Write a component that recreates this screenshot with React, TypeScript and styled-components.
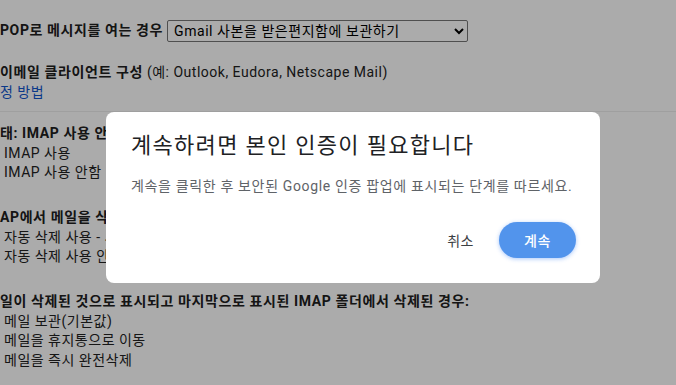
import React, { useState } from 'react';
import styled, { createGlobalStyle } from 'styled-components';

const GlobalStyle = createGlobalStyle`
  html, body {
    margin: 0;
    padding: 0;
    background: #ffffff;
    overflow: hidden;
  }
  body {
    font-family: Roboto, 'Noto Sans CJK KR', sans-serif;
    color: #222222;
  }
`;

type OptionGroup = {
  title: string;
  options: string[];
};

const groups: OptionGroup[] = [
  {
    title: '태: IMAP 사용 안함',
    options: ['IMAP 사용', 'IMAP 사용 안함'],
  },
  {
    title: 'AP에서 메일을 삭제로 표시할 경우:',
    options: [
      '자동 삭제 사용 - 서버를 즉시 업데이트합니다.',
      '자동 삭제 사용 안함 - 클라이언트가 서버를 업데이트할 때까지 기다립니다.',
    ],
  },
  {
    title: '일이 삭제된 것으로 표시되고 마지막으로 표시된 IMAP 폴더에서 삭제된 경우:',
    options: ['메일 보관(기본값)', '메일을 휴지통으로 이동', '메일을 즉시 완전삭제'],
  },
];

const App: React.FC = () => {
  const [open, setOpen] = useState(true);

  return (
    <>
      <GlobalStyle />
      <Page>
        <PopRow>
          <Strong>POP로 메시지를 여는 경우</Strong>
          <Select defaultValue="keep">
            <option value="keep">Gmail 사본을 받은편지함에 보관하기</option>
            <option value="read">Gmail 사본을 읽은 상태로 표시하기</option>
            <option value="archive">Gmail 사본을 보관처리하기</option>
            <option value="delete">Gmail 사본 삭제하기</option>
          </Select>
        </PopRow>
        <ClientBlock>
          <Line>
            <Strong>이메일 클라이언트 구성</Strong> (예: Outlook, Eudora, Netscape Mail)
          </Line>
          <Line>
            <Link href="#">정 방법</Link>
          </Line>
        </ClientBlock>
        <ImapSection>
          {groups.map((group) => (
            <Group key={group.title}>
              <Line>
                <Strong>{group.title}</Strong>
              </Line>
              {group.options.map((option) => (
                <OptionLine key={option}>{option}</OptionLine>
              ))}
            </Group>
          ))}
        </ImapSection>
      </Page>
      {open && (
        <Overlay>
          <Dialog role="dialog">
            <Title>계속하려면 본인 인증이 필요합니다</Title>
            <Body>계속을 클릭한 후 보안된 Google 인증 팝업에 표시되는 단계를 따르세요.</Body>
            <Actions>
              <TextButton onClick={() => setOpen(false)}>취소</TextButton>
              <PrimaryButton>계속</PrimaryButton>
            </Actions>
          </Dialog>
        </Overlay>
      )}
    </>
  );
};

const Page = styled.div`
  padding-top: 20px;
  font-size: 14px;
  line-height: 19.5px;
  letter-spacing: 0.5px;
  white-space: nowrap;
`;

const PopRow = styled.div`
  display: flex;
  align-items: center;
  gap: 4px;
  height: 22px;
`;

const Strong = styled.b`
  font-weight: 700;
  color: #202020;
  letter-spacing: 0.6px;
`;

const Select = styled.select`
  width: 301px;
  height: 22px;
  padding: 0 2px;
  font-family: Roboto, 'Noto Sans CJK KR', sans-serif;
  font-size: 14px;
  letter-spacing: 0.55px;
  color: #000000;
  background: #ffffff;
  border: 1px solid #767676;
  border-radius: 2px;
`;

const ClientBlock = styled.div`
  margin-top: 21px;
  padding-bottom: 9px;
  border-bottom: 1px solid #eeeeee;
`;

const Line = styled.div``;

const Link = styled.a`
  color: #1155cc;
  text-decoration: none;
`;

const ImapSection = styled.div`
  padding-top: 12px;
  display: flex;
  flex-direction: column;
  gap: 25.5px;
`;

const Group = styled.div``;

const OptionLine = styled.div`
  padding-left: 4px;
`;

const Overlay = styled.div`
  position: fixed;
  inset: 0;
  background: rgba(0, 0, 0, 0.33);
`;

const Dialog = styled.div`
  position: absolute;
  left: 106px;
  top: 112px;
  width: 494px;
  height: 171px;
  box-sizing: border-box;
  padding: 22px 24px 25px 25px;
  background: #ffffff;
  border-radius: 8px;
  display: flex;
  flex-direction: column;
`;

const Title = styled.h2`
  margin: 0;
  font-size: 22px;
  line-height: 24px;
  font-weight: 400;
  letter-spacing: 1.3px;
  color: #202124;
`;

const Body = styled.p`
  margin: 18px 0 0;
  font-size: 14px;
  line-height: 20px;
  letter-spacing: 0.65px;
  color: #5f6368;
`;

const Actions = styled.div`
  margin-top: 26px;
  display: flex;
  justify-content: flex-end;
  gap: 1px;
`;

const TextButton = styled.button`
  height: 36px;
  padding: 0 24px;
  border: none;
  background: transparent;
  font-family: Roboto, 'Noto Sans CJK KR', sans-serif;
  font-size: 14px;
  letter-spacing: 0.5px;
  color: #3c4043;
  cursor: pointer;
`;

const PrimaryButton = styled.button`
  width: 77px;
  height: 36px;
  border: none;
  border-radius: 18px;
  background: #5294ec;
  box-shadow: 0 1px 4px rgba(66, 133, 244, 0.45);
  font-family: Roboto, 'Noto Sans CJK KR', sans-serif;
  font-size: 14px;
  font-weight: 500;
  letter-spacing: 0.5px;
  color: #ffffff;
  cursor: pointer;
`;

export default App;
